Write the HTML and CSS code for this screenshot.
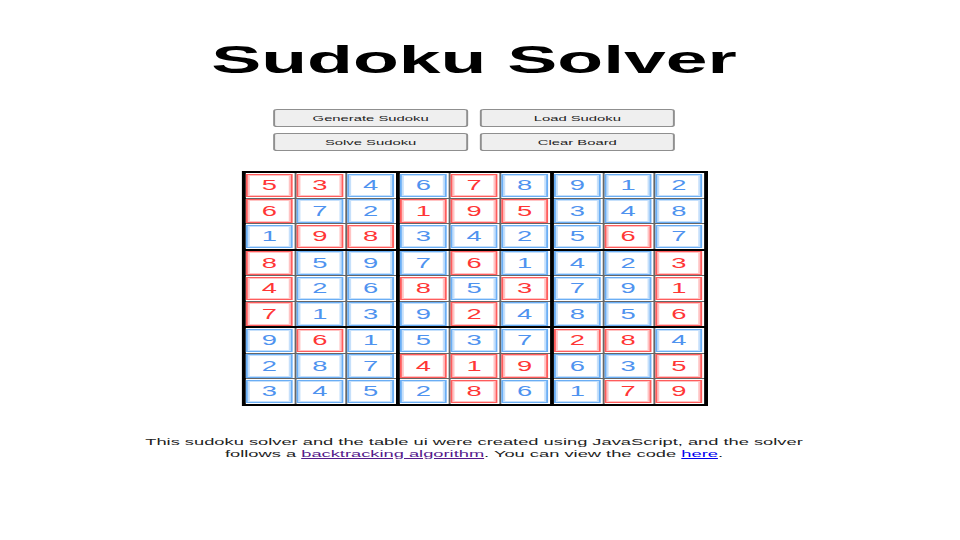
FILE: index.html
```html
<!DOCTYPE html>
<html lang="en">
<head>
<meta charset="utf-8">
<title>Sudoku Solver</title>
<link rel="stylesheet" href="styles.css">
</head>
<body>
<div class="page">
  <h1 class="title">Sudoku Solver</h1>
  <div class="controls">
    <button class="btn">Generate Sudoku</button>
    <button class="btn">Load Sudoku</button>
    <button class="btn">Solve Sudoku</button>
    <button class="btn">Clear Board</button>
  </div>
  <div class="board">
    <div class="block">
      <div class="cell"><span class="box given">5</span></div>
      <div class="cell"><span class="box given">3</span></div>
      <div class="cell"><span class="box solved">4</span></div>
      <div class="cell"><span class="box given">6</span></div>
      <div class="cell"><span class="box solved">7</span></div>
      <div class="cell"><span class="box solved">2</span></div>
      <div class="cell"><span class="box solved">1</span></div>
      <div class="cell"><span class="box given">9</span></div>
      <div class="cell"><span class="box given">8</span></div>
    </div>
    <div class="block">
      <div class="cell"><span class="box solved">6</span></div>
      <div class="cell"><span class="box given">7</span></div>
      <div class="cell"><span class="box solved">8</span></div>
      <div class="cell"><span class="box given">1</span></div>
      <div class="cell"><span class="box given">9</span></div>
      <div class="cell"><span class="box given">5</span></div>
      <div class="cell"><span class="box solved">3</span></div>
      <div class="cell"><span class="box solved">4</span></div>
      <div class="cell"><span class="box solved">2</span></div>
    </div>
    <div class="block">
      <div class="cell"><span class="box solved">9</span></div>
      <div class="cell"><span class="box solved">1</span></div>
      <div class="cell"><span class="box solved">2</span></div>
      <div class="cell"><span class="box solved">3</span></div>
      <div class="cell"><span class="box solved">4</span></div>
      <div class="cell"><span class="box solved">8</span></div>
      <div class="cell"><span class="box solved">5</span></div>
      <div class="cell"><span class="box given">6</span></div>
      <div class="cell"><span class="box solved">7</span></div>
    </div>
    <div class="block">
      <div class="cell"><span class="box given">8</span></div>
      <div class="cell"><span class="box solved">5</span></div>
      <div class="cell"><span class="box solved">9</span></div>
      <div class="cell"><span class="box given">4</span></div>
      <div class="cell"><span class="box solved">2</span></div>
      <div class="cell"><span class="box solved">6</span></div>
      <div class="cell"><span class="box given">7</span></div>
      <div class="cell"><span class="box solved">1</span></div>
      <div class="cell"><span class="box solved">3</span></div>
    </div>
    <div class="block">
      <div class="cell"><span class="box solved">7</span></div>
      <div class="cell"><span class="box given">6</span></div>
      <div class="cell"><span class="box solved">1</span></div>
      <div class="cell"><span class="box given">8</span></div>
      <div class="cell"><span class="box solved">5</span></div>
      <div class="cell"><span class="box given">3</span></div>
      <div class="cell"><span class="box solved">9</span></div>
      <div class="cell"><span class="box given">2</span></div>
      <div class="cell"><span class="box solved">4</span></div>
    </div>
    <div class="block">
      <div class="cell"><span class="box solved">4</span></div>
      <div class="cell"><span class="box solved">2</span></div>
      <div class="cell"><span class="box given">3</span></div>
      <div class="cell"><span class="box solved">7</span></div>
      <div class="cell"><span class="box solved">9</span></div>
      <div class="cell"><span class="box given">1</span></div>
      <div class="cell"><span class="box solved">8</span></div>
      <div class="cell"><span class="box solved">5</span></div>
      <div class="cell"><span class="box given">6</span></div>
    </div>
    <div class="block">
      <div class="cell"><span class="box solved">9</span></div>
      <div class="cell"><span class="box given">6</span></div>
      <div class="cell"><span class="box solved">1</span></div>
      <div class="cell"><span class="box solved">2</span></div>
      <div class="cell"><span class="box solved">8</span></div>
      <div class="cell"><span class="box solved">7</span></div>
      <div class="cell"><span class="box solved">3</span></div>
      <div class="cell"><span class="box solved">4</span></div>
      <div class="cell"><span class="box solved">5</span></div>
    </div>
    <div class="block">
      <div class="cell"><span class="box solved">5</span></div>
      <div class="cell"><span class="box solved">3</span></div>
      <div class="cell"><span class="box solved">7</span></div>
      <div class="cell"><span class="box given">4</span></div>
      <div class="cell"><span class="box given">1</span></div>
      <div class="cell"><span class="box given">9</span></div>
      <div class="cell"><span class="box solved">2</span></div>
      <div class="cell"><span class="box given">8</span></div>
      <div class="cell"><span class="box solved">6</span></div>
    </div>
    <div class="block">
      <div class="cell"><span class="box given">2</span></div>
      <div class="cell"><span class="box given">8</span></div>
      <div class="cell"><span class="box solved">4</span></div>
      <div class="cell"><span class="box solved">6</span></div>
      <div class="cell"><span class="box solved">3</span></div>
      <div class="cell"><span class="box given">5</span></div>
      <div class="cell"><span class="box solved">1</span></div>
      <div class="cell"><span class="box given">7</span></div>
      <div class="cell"><span class="box given">9</span></div>
    </div>
  </div>
  <p class="footer">This sudoku solver and the table ui were created using JavaScript, and the solver follows a <a class="link visited" href="#">backtracking algorithm</a>. You can view the code <a class="link" href="#">here</a>.</p>
</div>
</body>
</html>
```
FILE: styles.css
```css
html, body {
  margin: 0;
  padding: 0;
  background: #fff;
}

body {
  font-family: "Liberation Sans", Arial, sans-serif;
  padding-right: 12px;
  overflow: hidden;
}

.page {
  width: 486px;
  margin: 0 auto;
  display: flex;
  flex-direction: column;
  align-items: center;
  transform: scaleX(1.95);
  transform-origin: 50% 0;
}

.title {
  margin: 38px 0 0;
  font-size: 38.5px;
  line-height: 44px;
  font-weight: bold;
  color: #000;
}

.controls {
  margin-top: 27px;
  display: grid;
  grid-template-columns: 100px 100px;
  gap: 6px;
}

.btn {
  height: 18px;
  padding: 0;
  border: 1px solid #8f8f8f;
  border-radius: 2px;
  background: #efefef;
  font-family: "Liberation Sans", Arial, sans-serif;
  font-size: 7.6px;
  color: #222;
}

.board {
  margin-top: 20px;
  display: grid;
  grid-template-columns: repeat(3, 77px);
  gap: 2px;
  background: #000;
  border: 2px solid #000;
}

.block {
  display: grid;
  grid-template-columns: repeat(3, 25px);
  grid-template-rows: repeat(3, 24.5px);
  gap: 1px;
  background: #666;
}

.cell {
  background: #fff;
  padding: 0.5px;
  display: flex;
}

.box {
  flex: 1;
  display: flex;
  align-items: center;
  justify-content: center;
  font-size: 14px;
  line-height: 1;
}

.given {
  color: #ff3636;
  border: 1px solid #ff5c5c;
  box-shadow: inset 0 0 0 1px #ffc4c4;
}

.solved {
  color: #4f93ef;
  border: 1px solid #6aaef5;
  box-shadow: inset 0 0 0 1px #c6e0fb;
}

.footer {
  margin: 30px 0 0;
  width: 350px;
  text-align: center;
  font-size: 9.4px;
  line-height: 12px;
  color: #222;
}

.link {
  color: #0000ee;
  text-decoration: underline;
}

.link.visited {
  color: #551a8b;
}
```
